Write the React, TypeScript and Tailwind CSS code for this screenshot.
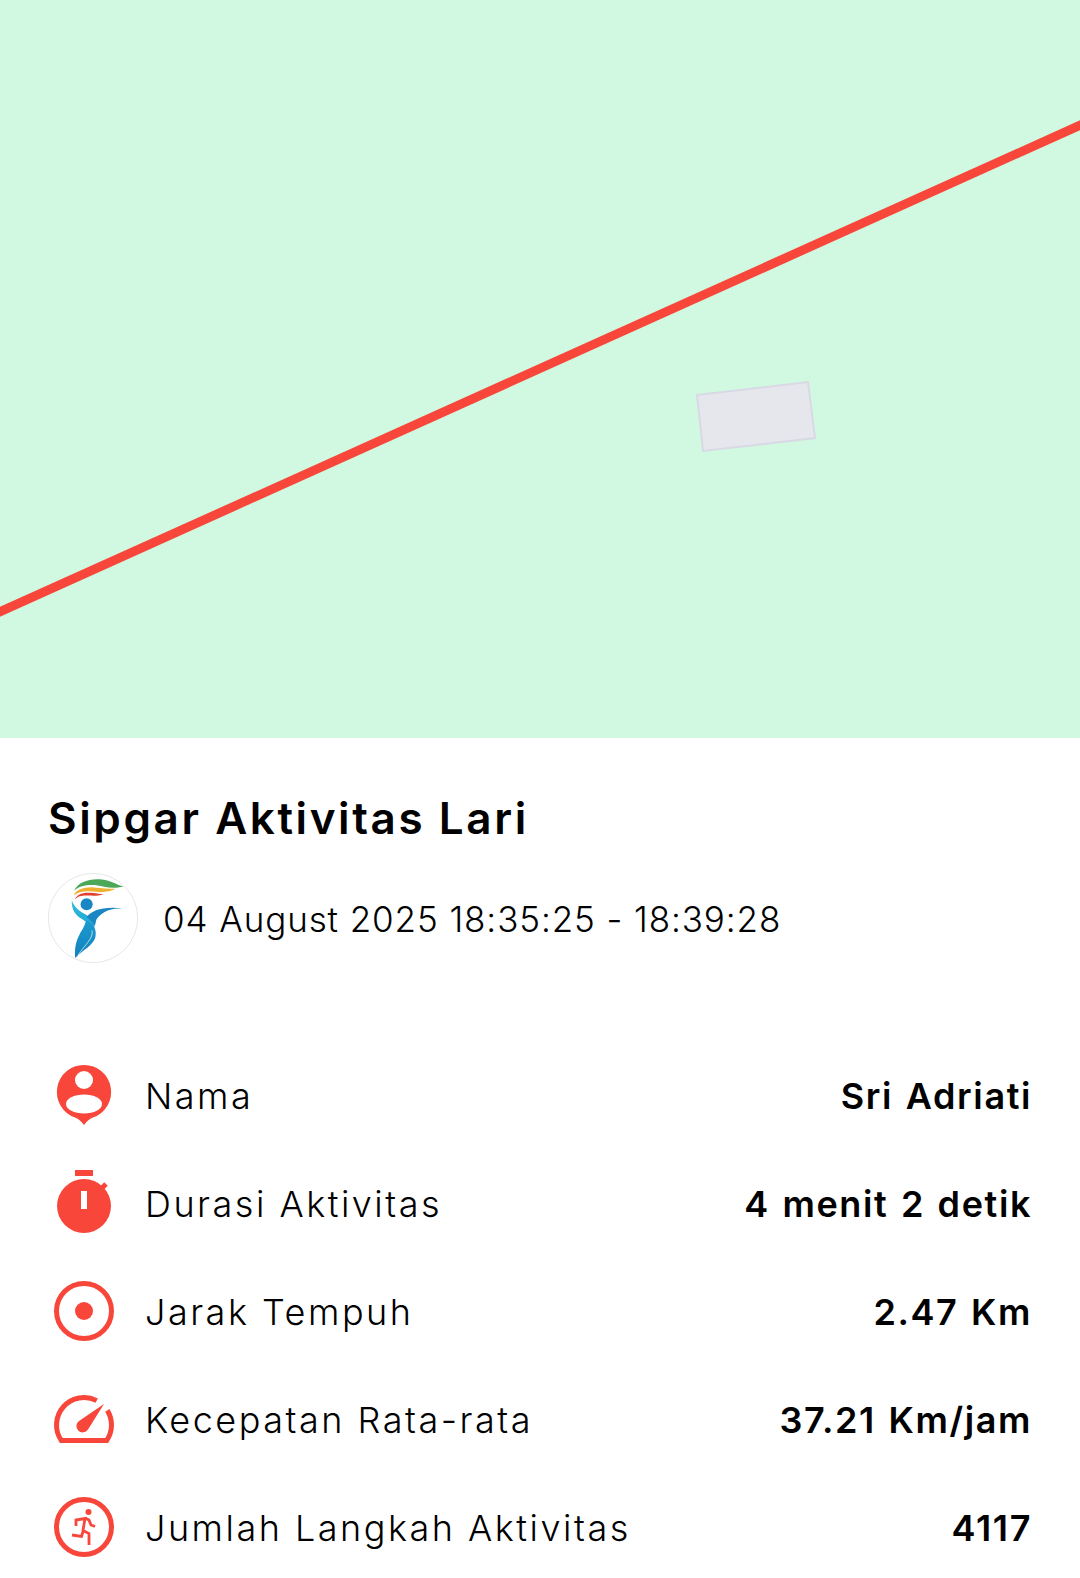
const RED = "#f8463a";

const NamaIcon = () => (
  <svg width="72" height="72" viewBox="0 0 72 72">
    <path fill={RED} d="M36 5a27 27 0 0 1 9 52.500c-3 1-5.500 3-9 7.500c-3.500-4.500-6-6.500-9-7.500A27 27 0 0 1 36 5z" />
    <circle cx="36" cy="20" r="9" fill="#fff" />
    <ellipse cx="36" cy="44" rx="18" ry="9.500" fill="#fff" />
  </svg>
);

const DurasiIcon = () => (
  <svg width="72" height="72" viewBox="0 0 72 72">
    <rect x="27" y="2" width="18" height="6" fill={RED} />
    <path d="M52 22l6-6" stroke={RED} strokeWidth="5" />
    <circle cx="36" cy="38" r="27" fill={RED} />
    <rect x="33" y="23" width="6" height="18" fill="#fff" />
  </svg>
);

const JarakIcon = () => (
  <svg width="72" height="72" viewBox="0 0 72 72">
    <circle cx="36" cy="35" r="27.500" fill="none" stroke={RED} strokeWidth="5" />
    <circle cx="36" cy="35" r="9" fill={RED} />
  </svg>
);

const KecepatanIcon = () => (
  <svg width="72" height="72" viewBox="0 0 72 72">
    <path
      d="M48.700 16.600A27.500 27.500 0 0 0 13.300 56.500H58.700A27.500 27.500 0 0 0 59.300 26.400"
      fill="none"
      stroke={RED}
      strokeWidth="5"
    />
    <path fill={RED} d="M56 20L40 45.500a6.300 6.300 0 1 1-9-8.500z" />
  </svg>
);

const LangkahIcon = () => (
  <svg width="72" height="72" viewBox="0 0 72 72">
    <circle cx="36" cy="35" r="27.500" fill="none" stroke={RED} strokeWidth="5" />
    <circle cx="40.500" cy="20" r="3" fill={RED} />
    <path
      d="M28 34v-6l9-1.500l-2 12l6 3v11.500M24 43l9.500 1.500l2-6.500M38 26.500l3 1.500l2 5l4 1.500"
      fill="none"
      stroke={RED}
      strokeWidth="2.800"
    />
  </svg>
);

const Logo = () => (
  <svg width="90" height="90" viewBox="25 25 268 268" className="shrink-0">
    <defs>
      <linearGradient id="logo-arm" x1="0" y1="0" x2="0" y2="1">
        <stop offset="0" stopColor="#2fc0dc" />
        <stop offset="1" stopColor="#1ea0cf" />
      </linearGradient>
      <linearGradient id="logo-body" x1="0" y1="0" x2="0" y2="1">
        <stop offset="0" stopColor="#1c9bd0" />
        <stop offset="1" stopColor="#1280bd" />
      </linearGradient>
    </defs>
    <circle cx="159" cy="159" r="133" fill="#fff" stroke="#d9d9d9" strokeWidth="2" />
    <path fill="#4aa858" d="M103 78C112 52 150 40 186 44C212 47 230 60 250 65C228 70 212 70 192 66C160 58 125 58 103 78z" />
    <path fill="#f0b02f" d="M102 92C108 74 135 66 162 68C185 70 205 72 226 72C210 80 190 84 168 81C145 78 118 78 102 92z" />
    <path fill="#e2402f" d="M105 104C110 90 128 82 150 84C165 85 178 88 191 88C175 93 160 93 147 92C130 91 115 92 105 104z" />
    <path fill="url(#logo-arm)" d="M96 106c-2 26 10 44 30 56c18 10 28 22 36 36c6-22-6-40-26-50c-18-10-34-22-40-42z" />
    <circle cx="140" cy="118" r="18" fill="#1a86c4" />
    <path fill="#1a86c4" d="M140 156c16-20 46-32 108-26c-34 0-60 8-78 32c-4 8-2 14-6 20c-6-10-14-18-24-26z" />
    <path fill="url(#logo-body)" d="M138 166c20 8 34 26 28 50c-6 24-40 40-60 62c-2-22 0-46 12-68c8-16 18-28 20-44z" />
    <path fill="none" stroke="#fff" strokeWidth="2" d="M156 196c6 22-22 44-42 74" />
  </svg>
);

const rows = [
  { icon: <NamaIcon />, label: "Nama", value: "Sri Adriati" },
  { icon: <DurasiIcon />, label: "Durasi Aktivitas", value: "4 menit 2 detik" },
  { icon: <JarakIcon />, label: "Jarak Tempuh", value: "2.47 Km" },
  { icon: <KecepatanIcon />, label: "Kecepatan Rata-rata", value: "37.21 Km/jam" },
  { icon: <LangkahIcon />, label: "Jumlah Langkah Aktivitas", value: "4117" },
];

export default function App() {
  return (
    <div className="h-[1578px] overflow-hidden bg-white font-['Inter',sans-serif] text-black">
      <div className="h-[738px] bg-[#d1f8e1]">
        <svg width="1080" height="738" viewBox="0 0 1080 738" className="block">
          <polygon points="697,395 808,382 815,438 703,451" fill="#e6e7ec" stroke="#d9d9e6" strokeWidth="2" />
          <line x1="-5" y1="614" x2="1085" y2="123" stroke={RED} strokeWidth="9" />
        </svg>
      </div>

      <div className="px-12 pt-[51px]">
        <h1 className="h-[58px] text-[44px] leading-[58px] font-semibold tracking-[2.6px]">Sipgar Aktivitas Lari</h1>

        <div className="mt-[26px] flex items-center gap-[25px]">
          <Logo />
          <p className="mt-[2px] text-[35px] font-light tracking-[0.9px]">04 August 2025 18:35:25 - 18:39:28</p>
        </div>

        <div className="mt-[79px]">
          {rows.map((row) => (
            <div key={row.label} className="flex h-[108px] items-center">
              {row.icon}
              <p className="ml-[25px] text-[36px] font-light tracking-[2.5px]">{row.label}</p>
              <p className="ml-auto text-[36px] font-semibold tracking-[1.6px] [word-spacing:2px]">{row.value}</p>
            </div>
          ))}
        </div>
      </div>
    </div>
  );
}
